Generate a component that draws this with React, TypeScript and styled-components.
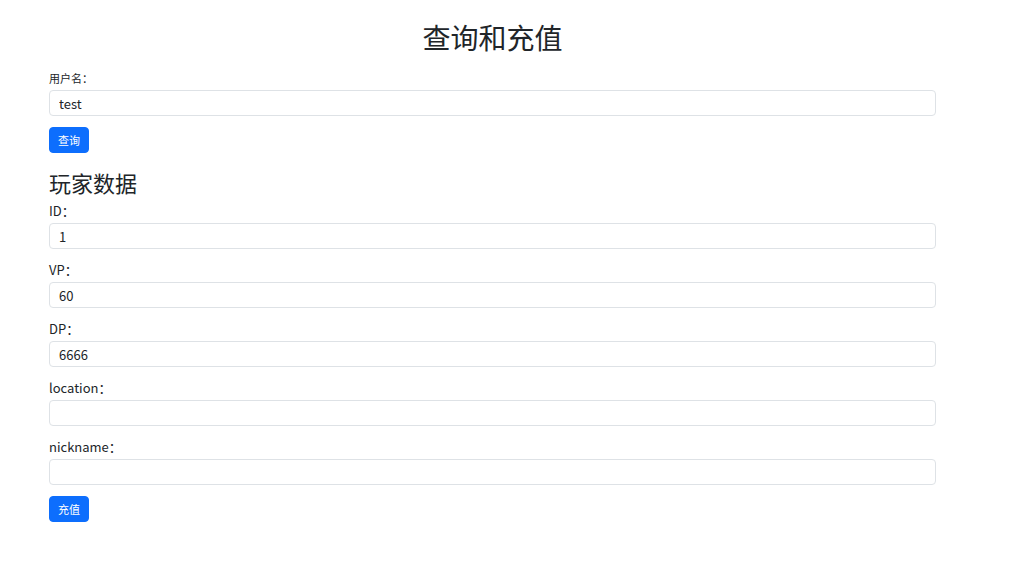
import React from "react";
import styled, { createGlobalStyle } from "styled-components";

const GlobalStyle = createGlobalStyle`
  html, body {
    margin: 0;
    padding: 0;
    background: #ffffff;
  }
  body {
    font-family: "Noto Sans CJK SC", "Noto Sans", sans-serif;
    color: #212529;
  }
  * { box-sizing: border-box; }
`;

const Container = styled.div`
  width: 887px;
  margin-left: 49px;
`;

const Title = styled.h1`
  margin: 20px 0 16px;
  font-size: 28px;
  line-height: 34px;
  font-weight: 400;
  text-align: center;
  color: #212529;
`;

const SectionTitle = styled.h2`
  margin: 16px 0 6px;
  font-size: 22px;
  line-height: 26px;
  font-weight: 400;
  color: #212529;
`;

const Field = styled.div`
  display: flex;
  flex-direction: column;
  margin-bottom: 11px;

  &:last-of-type {
    margin-bottom: 10px;
  }
`;

const Label = styled.label<{ $small?: boolean }>`
  display: block;
  font-size: ${(p) => (p.$small ? "11px" : "13px")};
  line-height: ${(p) => (p.$small ? "16px" : "20px")};
  margin-bottom: ${(p) => (p.$small ? "4px" : "2px")};
  color: #212529;
`;

const Input = styled.input`
  display: block;
  width: 100%;
  height: 26px;
  padding: 0 9px;
  font-family: "Noto Sans CJK SC", "Noto Sans", sans-serif;
  font-size: 13px;
  color: #212529;
  background: #fff;
  border: 1px solid #dee2e6;
  border-radius: 4px;
  outline: none;
`;

const Button = styled.button`
  display: inline-flex;
  align-items: center;
  justify-content: center;
  width: 40px;
  height: 26px;
  padding: 0;
  font-family: "Noto Sans CJK SC", "Noto Sans", sans-serif;
  font-size: 11px;
  color: #fff;
  background: #0d6efd;
  border: 1px solid #0d6efd;
  border-radius: 4px;
  cursor: pointer;
`;

const QueryField = styled(Field)`
  margin-bottom: 10px;
`;

const players = [
  { label: "ID：", value: "1" },
  { label: "VP：", value: "60" },
  { label: "DP：", value: "6666" },
  { label: "location：", value: "" },
  { label: "nickname：", value: "" },
];

export default function App() {
  return (
    <>
      <GlobalStyle />
      <Container>
        <Title>查询和充值</Title>
        <QueryField>
          <Label $small>用户名：</Label>
          <Input defaultValue="test" />
        </QueryField>
        <Button>查询</Button>
        <SectionTitle>玩家数据</SectionTitle>
        {players.map((p) => (
          <Field key={p.label}>
            <Label>{p.label}</Label>
            <Input defaultValue={p.value} />
          </Field>
        ))}
        <Button>充值</Button>
      </Container>
    </>
  );
}
